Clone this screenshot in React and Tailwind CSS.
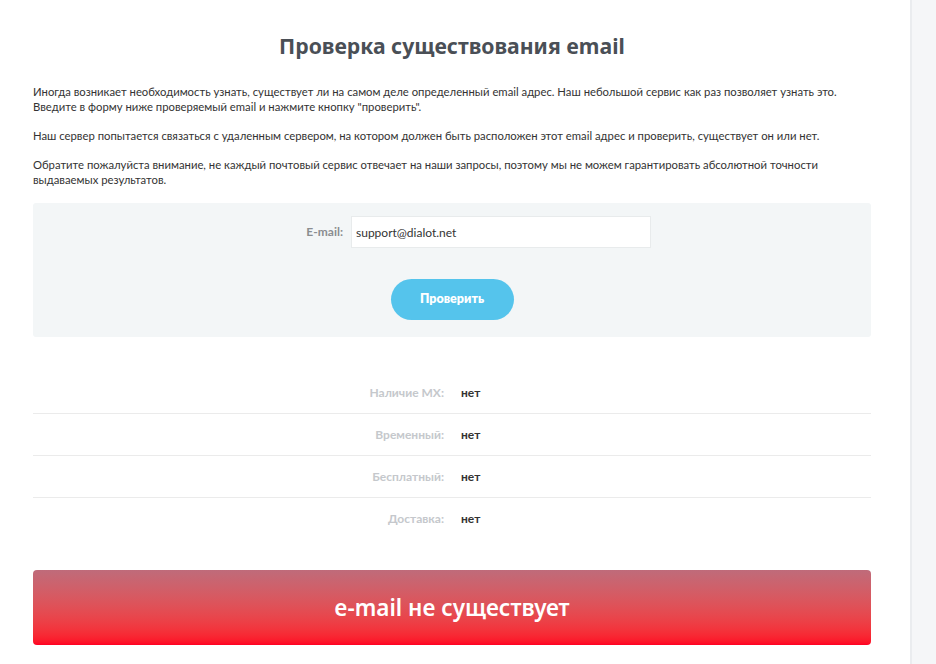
const rows = [
  { label: 'Наличие MX:', value: 'нет' },
  { label: 'Временный:', value: 'нет' },
  { label: 'Бесплатный:', value: 'нет' },
  { label: 'Доставка:', value: 'нет' },
]

export default function App() {
  return (
    <div className="flex min-h-[664px] bg-white" style={{ fontFamily: 'Lato, "Open Sans", sans-serif' }}>
      <main className="w-[910px] shrink-0 pl-[33px] pr-[39px]">
        <h1
          className="pt-[32px] text-center text-[21.2px] font-bold leading-[28px] text-[#4a4f56]"
          style={{ fontFamily: '"Noto Sans", sans-serif' }}
        >
          Проверка существования email
        </h1>

        <div className="mt-[24px] space-y-[14px] text-[11.3px] leading-[15px] text-[#333]">
          <p>
            Иногда возникает необходимость узнать, существует ли на самом деле определенный email адрес. Наш небольшой сервис как раз позволяет узнать это.
            <br />
            Введите в форму ниже проверяемый email и нажмите кнопку "проверить".
          </p>
          <p>
            Наш сервер попытается связаться с удаленным сервером, на котором должен быть расположен этот email адрес и проверить, существует он или нет.
          </p>
          <p>
            Обратите пожалуйста внимание, не каждый почтовый сервис отвечает на наши запросы, поэтому мы не можем гарантировать абсолютной точности выдаваемых результатов.
          </p>
        </div>

        <form className="mt-[16px] rounded-[3px] bg-[#f3f6f7] pt-[13px] pb-[17px]">
          <div className="flex items-center">
            <label className="w-[310px] text-right text-[12px] font-bold text-[#8a8d90]">E-mail:</label>
            <input
              type="text"
              defaultValue="support@dialot.net"
              className="ml-[8px] h-[32px] w-[300px] border border-[#e8ebec] bg-white px-[4px] text-[12px] text-[#333] outline-none"
            />
          </div>
          <div className="mt-[31px] flex justify-center">
            <button
              type="button"
              className="h-[41px] w-[123px] rounded-full bg-[#55c4ec] text-[12.5px] font-extrabold text-white"
            >
              Проверить
            </button>
          </div>
        </form>

        <div className="mt-[35px]">
          {rows.map((r, i) => (
            <div
              key={r.label}
              className={`flex h-[42px] items-center text-[12px] font-bold ${i < rows.length - 1 ? 'border-b border-[#ebebeb]' : ''}`}
            >
              <span className="w-[411px] text-right text-[#c5c8cc]">{r.label}</span>
              <span className="ml-[17px] text-[#333]">{r.value}</span>
            </div>
          ))}
        </div>

        <div
          className="mt-[30px] flex h-[75px] items-center justify-center rounded-[4px] bg-gradient-to-b from-[#bf6b7a] to-[#ff0022] text-[22.5px] font-semibold text-white"
          style={{ fontFamily: '"Noto Sans", sans-serif' }}
        >
          e-mail не существует
        </div>
      </main>
      <aside className="flex-1 border-l-2 border-[#eaecef] bg-[#f5f6f8]" />
    </div>
  )
}
